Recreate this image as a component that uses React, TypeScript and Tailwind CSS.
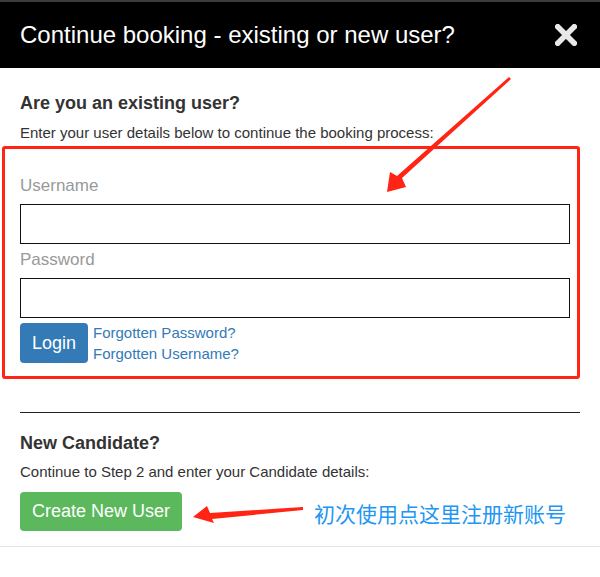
import React from "react"

function CloseIcon() {
  return (
    <svg width="22" height="22" viewBox="0 0 24 24" className="block">
      <path d="M3 3 L21 21 M21 3 L3 21" stroke="#e8e8e8" strokeWidth="6" strokeLinecap="square" />
    </svg>
  )
}

function Annotations() {
  return (
    <div className="pointer-events-none absolute inset-0">
      <div className="absolute left-[2px] top-[146px] h-[233px] w-[578px] rounded-[3px] border-[3px] border-[#ff2414]" />
      <svg width="600" height="577" className="absolute left-0 top-0">
        {/* big diagonal arrow */}
        <polygon
          points="509,77 511,79 402,178 406,187 387,192 390,172 397,176"
          fill="#ff2414"
        />
        {/* small horizontal arrow */}
        <polygon
          points="303,507 303,510 212,519 214,523 193,517 207,506 210,513"
          fill="#ff2414"
        />
      </svg>
      <div
        className="absolute left-[314px] top-[500px] text-[21px] leading-[26px] text-[#2196f3]"
        style={{ fontFamily: '"Noto Sans CJK SC", sans-serif' }}
      >
        初次使用点这里注册新账号
      </div>
    </div>
  )
}

export default function App() {
  return (
    <div
      className="relative h-[577px] w-[600px] overflow-hidden bg-white text-[#333]"
      style={{ fontFamily: '"Liberation Sans", Arial, sans-serif' }}
    >
      <div className="h-[2px] bg-[#3c3c3c]" />
      <header className="flex h-[66px] items-center justify-between bg-black pl-5 pr-[23px]">
        <h2 className="text-[24px] leading-none text-white">Continue booking - existing or new user?</h2>
        <CloseIcon />
      </header>

      <div className="px-5">
        <h4 className="mt-[25px] text-[18px] font-bold leading-5">Are you an existing user?</h4>
        <p className="mt-[10px] text-[15px] leading-5">
          Enter your user details below to continue the booking process:
        </p>

        <div className="w-[550px]">
          <label className="mt-[33px] block text-[17px] leading-5 text-[#999]">Username</label>
          <input className="mt-[8px] block h-[40px] w-full border-[1.5px] border-[#111] outline-none" />
          <label className="mt-[6px] block text-[17px] leading-5 text-[#999]">Password</label>
          <input type="password" className="mt-[8px] block h-[40px] w-full border-[1.5px] border-[#111] outline-none" />
          <div className="mt-[4px] flex items-center">
            <button className="h-[40px] w-[68px] rounded-[4px] bg-[#337ab7] text-[18px] text-white">Login</button>
            <div className="ml-[5px] flex flex-col text-[15px] leading-[21px] text-[#337ab7]">
              <a>Forgotten Password?</a>
              <a>Forgotten Username?</a>
            </div>
          </div>
        </div>

        <hr className="mt-[48px] w-[560px] border-t border-[#222]" />

        <h4 className="mt-[20px] text-[18px] font-bold leading-5">New Candidate?</h4>
        <p className="mt-[9px] text-[15px] leading-5">Continue to Step 2 and enter your Candidate details:</p>
        <button className="mt-[10px] h-[39px] w-[162px] rounded-[4px] bg-[#5cb85c] text-[18px] text-white">
          Create New User
        </button>
      </div>
      <div className="mt-[15px] h-px bg-[#e5e5e5]" />

      <Annotations />
    </div>
  )
}
